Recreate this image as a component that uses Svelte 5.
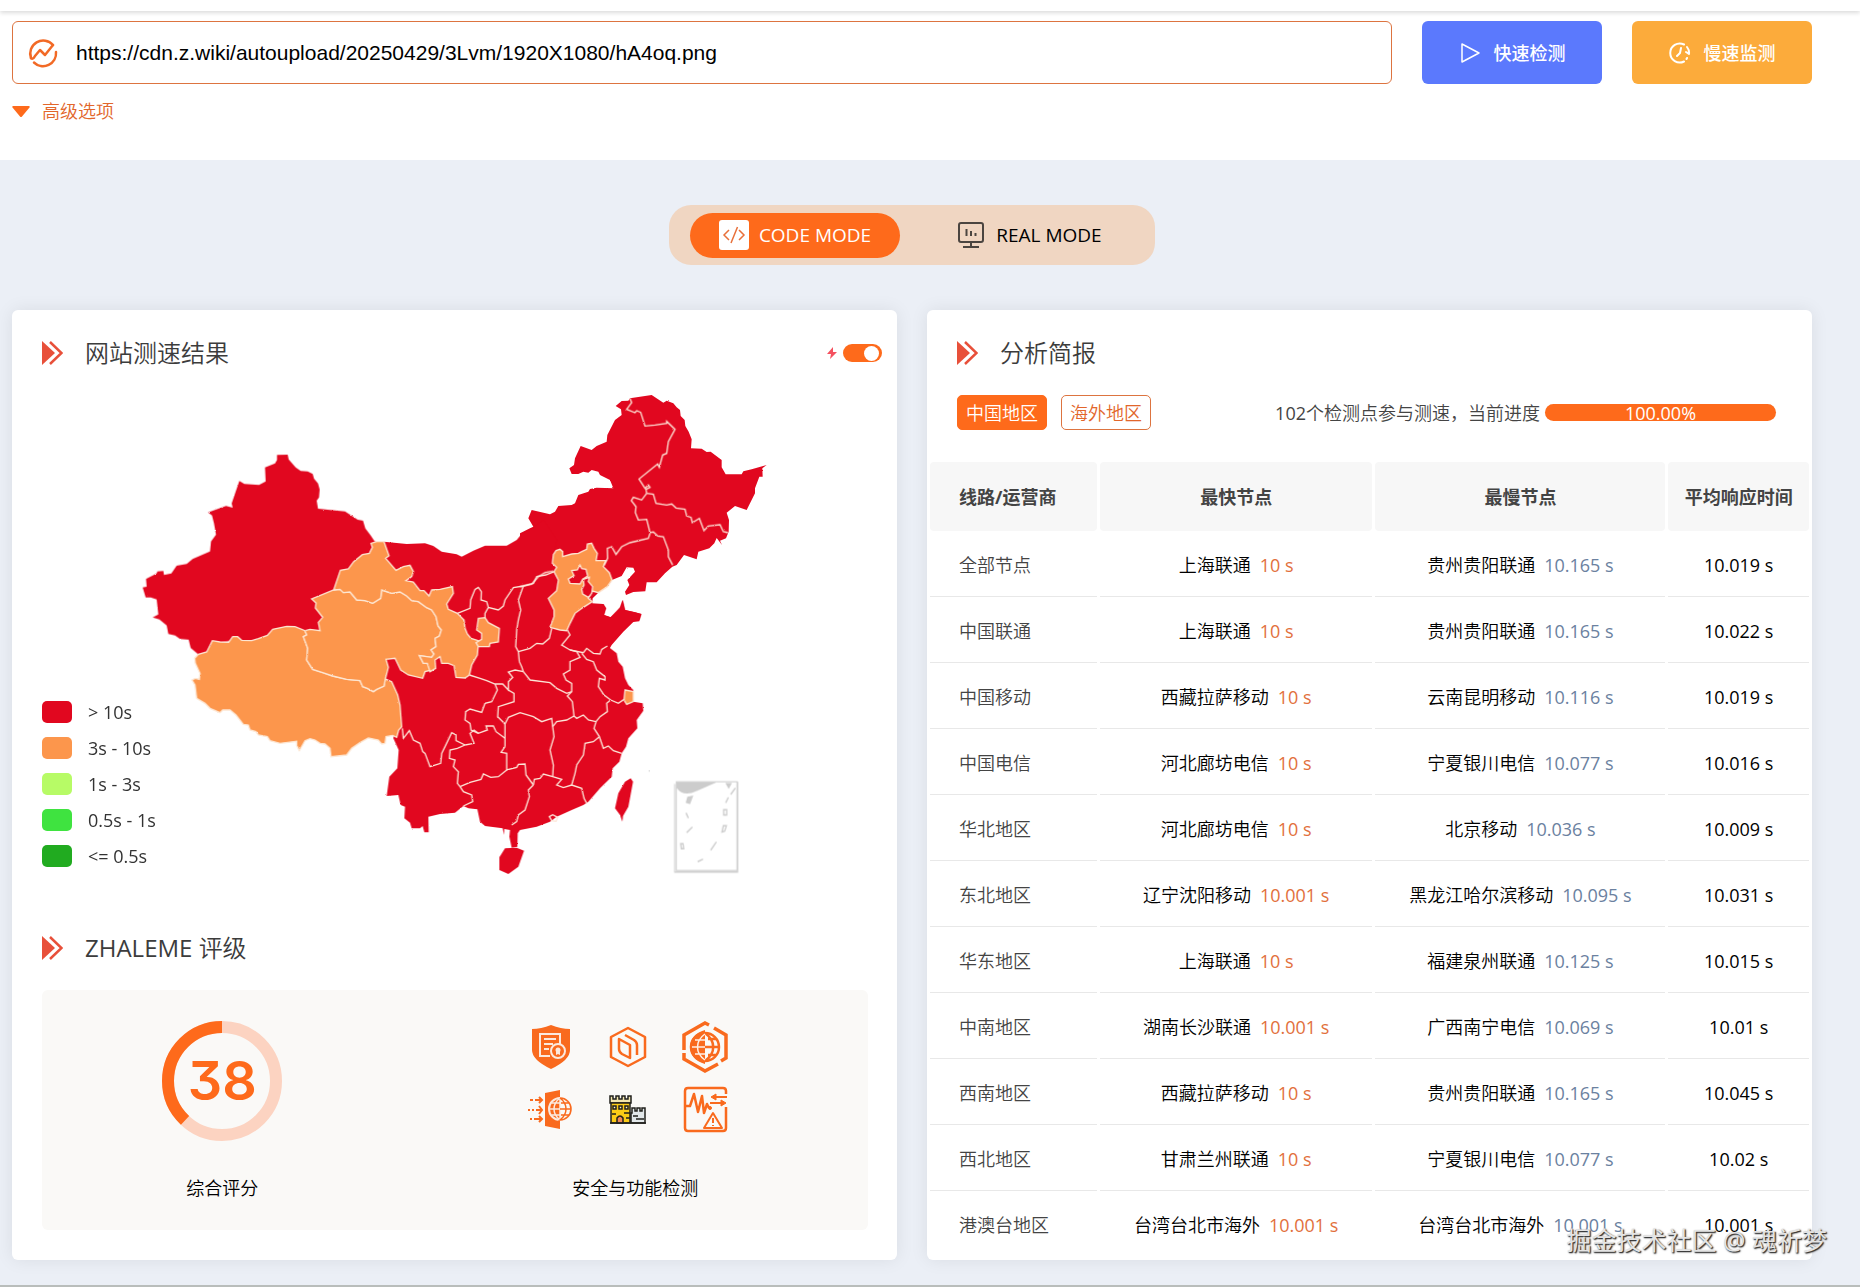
<script lang="ts">
    let url = 'https://cdn.z.wiki/autoupload/20250429/3Lvm/1920X1080/hA4oq.png';
    let mode = 'code';
    let area = 'china';
    let fast = true;
    let progress = 100;
    let score = 38;

    const legend = [
        { color: '#e1071f', label: '> 10s' },
        { color: '#fc964c', label: '3s - 10s' },
        { color: '#b7fb66', label: '1s - 3s' },
        { color: '#3fe340', label: '0.5s - 1s' },
        { color: '#21ab20', label: '<= 0.5s' }
    ];

    const rows = [
        { line: '全部节点', fast: '上海联通', fastTime: '10 s', slow: '贵州贵阳联通', slowTime: '10.165 s', avg: '10.019 s' },
        { line: '中国联通', fast: '上海联通', fastTime: '10 s', slow: '贵州贵阳联通', slowTime: '10.165 s', avg: '10.022 s' },
        { line: '中国移动', fast: '西藏拉萨移动', fastTime: '10 s', slow: '云南昆明移动', slowTime: '10.116 s', avg: '10.019 s' },
        { line: '中国电信', fast: '河北廊坊电信', fastTime: '10 s', slow: '宁夏银川电信', slowTime: '10.077 s', avg: '10.016 s' },
        { line: '华北地区', fast: '河北廊坊电信', fastTime: '10 s', slow: '北京移动', slowTime: '10.036 s', avg: '10.009 s' },
        { line: '东北地区', fast: '辽宁沈阳移动', fastTime: '10.001 s', slow: '黑龙江哈尔滨移动', slowTime: '10.095 s', avg: '10.031 s' },
        { line: '华东地区', fast: '上海联通', fastTime: '10 s', slow: '福建泉州联通', slowTime: '10.125 s', avg: '10.015 s' },
        { line: '中南地区', fast: '湖南长沙联通', fastTime: '10.001 s', slow: '广西南宁电信', slowTime: '10.069 s', avg: '10.01 s' },
        { line: '西南地区', fast: '西藏拉萨移动', fastTime: '10 s', slow: '贵州贵阳联通', slowTime: '10.165 s', avg: '10.045 s' },
        { line: '西北地区', fast: '甘肃兰州联通', fastTime: '10 s', slow: '宁夏银川电信', slowTime: '10.077 s', avg: '10.02 s' },
        { line: '港澳台地区', fast: '台湾台北市海外', fastTime: '10.001 s', slow: '台湾台北市海外', slowTime: '10.001 s', avg: '10.001 s' }
    ];

    // 省界线
    const northeastBorders = [
        'M330,55 335,68 320,88 345,98 350,92 362,97 375,138 405,135 440,130 440,124 465,148 445,185 440,220 428,225 418,262 413,252 357,297 375,325 385,315 390,322 378,328 380,340',
        'M380,340 400,343 408,370 440,375 455,372 468,384 495,388 500,408 513,412 517,428 538,415 552,452 565,438 600,434 610,455 624,458',
        'M380,340 365,360 340,352 334,362 348,380 346,398 355,420 380,418 390,458 400,456 413,468 430,470 445,510 445,530 458,555',
        'M390,460 385,475 355,482 330,488 305,500 288,523 275,500 262,505 263,535 252,555',
        'M100,573 75,578 55,590 35,612 0,620'
    ];

    const southBorders = [
        'M553,155 527,165 500,170 490,190 460,198 430,203 405,240 400,258 385,270 355,262 350,245 333,240 334,215 325,202 315,208 302,240 300,265 262,280',
        'M355,262 345,280 345,293',
        'M460,198 445,240 452,270 445,300 440,330 437,380 445,395 448,425 455,440 460,455',
        'M445,395 480,385 500,370 518,372 538,355 545,325',
        'M460,455 435,450 415,456 428,472 415,485 415,510 398,492 375,492 350,482 330,475 298,465',
        'M460,455 480,480 540,488 560,505 590,520 605,515',
        'M592,330 600,345 575,375 600,390 620,395 630,412 600,425 600,450 580,462 588,480 605,490 605,515 592,528 607,545 612,588',
        'M600,390 640,398 650,385 670,400 690,402 695,388 712,378',
        'M635,400 650,418 670,425 680,450 705,470 705,480 688,475 685,500 702,525 722,540 745,550 762,538',
        'M722,540 710,550 712,575 690,590 678,605',
        'M548,620 560,605 590,600 612,588 620,595 640,585 655,600 678,605 672,625 688,650 700,685 715,678 730,692 755,700',
        'M688,650 670,665 645,670 640,705 620,735 615,760 605,795',
        'M415,510 432,520 432,545 385,560 383,590 405,612',
        'M405,680 405,612 415,592 450,578 490,590 515,605 545,595 548,620 552,650 540,690 550,735 548,770',
        'M405,680 393,697 410,700 410,750 440,742 445,733 465,732 468,765 490,795',
        'M490,795 493,778 510,775 520,762 548,770 575,778 560,795 580,803 605,795 635,805 642,835 650,850',
        'M490,795 475,810 478,830 465,870 445,885 440,905 425,915',
        'M410,750 385,770 362,772 340,762 333,778 300,787 270,800',
        'M270,800 262,790 265,755 250,740 255,720 238,715 240,690 262,685 285,675',
        'M97,625 100,655 118,632 130,660 150,670 158,695 165,700 180,740 212,730 215,700 225,680 245,638 258,645 258,662 285,675',
        'M285,675 312,670 300,640 312,630 325,640 352,630 348,618 370,618 378,635 405,655',
        'M375,492 382,510 365,545 345,550 335,577 300,567 287,575 285,600 300,610 303,630 325,640',
        'M270,800 280,815 305,825 308,845 280,858',
        'M538,890 548,884 563,892 558,904 545,902Z'
    ];
</script>

<div class="page">
    <div class="top-line"></div>

    <header class="search">
        <form class="search-row" on:submit|preventDefault>
            <div class="url-box">
                <svg class="url-icon" viewBox="0 0 30 30" fill="none" stroke="#f26a26" stroke-width="2.5" stroke-linejoin="round" stroke-linecap="round">
                    <path d="M25 7A13 13 0 0 0 3 20M28 14A13 13 0 0 1 6 24.500" />
                    <path d="M3 20Q5 22 7 18L12 12L17 17L25 7" />
                </svg>
                <input type="text" aria-label="网址" bind:value={url} />
            </div>
            <button type="submit" class="check-btn quick">
                <svg viewBox="0 0 22 22" fill="none" stroke="white" stroke-width="1.5" stroke-linejoin="round"><path d="M3 2L20 11L3 20Z" /></svg>
                快速检测
            </button>
            <button type="button" class="check-btn slow">
                <svg viewBox="0 0 22 22" fill="none" stroke="white" stroke-width="2" stroke-linecap="round"><path d="M15 2.500A9.500 9.500 0 1 0 15 19.500M18 5A9.500 9.500 0 0 1 20 12M20 12L17 10M18 16L17.500 17M12 6L11 11L8 14" /></svg>
                慢速监测
            </button>
        </form>
        <button type="button" class="advanced">
            <svg viewBox="0 0 18 11"><path d="M1 0H17Q18 0 17.500 1.500L10 10.500Q9 11.500 8 10.500L.5 1.500Q0 0 1 0Z" fill="#fe6a1b" /></svg>
            高级选项
        </button>
    </header>

    <main>
        <div class="mode-switch">
            <button class="mode-btn" class:active={mode === 'code'} on:click={() => (mode = 'code')}>
                <svg viewBox="0 0 30 30" class="mode-icon">
                    <rect width="30" height="30" rx="3" fill="white" />
                    <path d="M10 10L5 15L10 20M20 10L25 15L20 20M18.500 7L12 23" fill="none" stroke="#e8703a" stroke-width="1.500" />
                </svg>
                CODE MODE
            </button>
            <button class="mode-btn" class:active={mode === 'real'} on:click={() => (mode = 'real')}>
                <svg viewBox="0 0 30 30" class="mode-icon">
                    <path d="M5 3H25Q27 3 27 5V20Q27 22 25 22H5Q3 22 3 20V5Q3 3 5 3ZM15 22V27M7 27H23" fill="none" stroke="#4b4540" stroke-width="2" />
                    <path d="M10.500 9V16M15 11V16M19.500 13V16" stroke="#4b4540" stroke-width="2" />
                </svg>
                REAL MODE
            </button>
        </div>

        <div class="cards">
            <section class="card">
                <div class="card-title">
                    <svg class="arrow" viewBox="0 0 21 24"><path d="M0 0L13 12L0 24Z" fill="#e8503a" /><path d="M8 1L19.500 12L8 23" fill="none" stroke="#e8503a" stroke-width="2.500" /></svg>
                    <h2>网站测速结果</h2>
                    <label class="switch">
                        <svg viewBox="0 0 10 12"><path d="M6 0L0 7H4L3 12L10 5H6Z" fill="#f4515f" /></svg>
                        <input type="checkbox" aria-label="快速模式" bind:checked={fast} />
                        <span class="track"></span>
                    </label>
                </div>

                <div class="map-area">
                    <svg class="map" viewBox="0 0 1950 1530" role="img" aria-label="中国地图">
                        <defs>
                            <filter id="coast" x="-2%" y="-2%" width="104%" height="104%" color-interpolation-filters="sRGB">
                                <feTurbulence type="fractalNoise" baseFrequency="0.2" numOctaves="2" seed="4" />
                                <feDisplacementMap in="SourceGraphic" scale="5" xChannelSelector="R" yChannelSelector="G" />
                            </filter>
                        </defs>
                        <g filter="url(#coast)">
                            <g class="slowest">
                                <path d="M441,225 473,224 476,238 497,262 512,273 533,274 548,282 552,296 564,310 569,328 567,352 560,362 564,386 600,390 645,394 683,419 699,422 706,445 722,466 733,483 760,500 700,600 611,640 545,657 570,669 570,684 590,712 580,752 525,760 470,745 412,772 365,788 318,780 247,792 230,820 205,823 182,804 176,779 150,777 135,766 115,762 110,736 88,718 68,712 85,703 80,658 62,652 47,652 38,622 50,620 48,597 80,580 82,574 100,573 102,585 124,580 140,557 170,552 188,537 240,514 243,484 258,464 252,430 246,406 234,397 288,378 308,383 305,370 328,303 343,312 387,315 407,304 405,262 435,250 441,240Z" />
                                <g transform="translate(1170 0)">
                                    <path d="M330,55 395,45 430,68 440,62 460,70 470,82 480,90 482,108 494,120 496,138 506,155 515,178 513,205 545,206 560,216 572,215 605,240 605,262 617,283 665,283 670,274 695,268 740,255 727,265 728,290 718,290 705,325 705,340 680,390 645,378 620,398 627,420 626,455 618,475 600,482 606,495 590,474 583,490 568,505 535,515 530,538 492,525 470,555 457,560 435,580 410,607 380,607 376,634 340,636 318,645 315,635 328,615 322,600 345,575 340,563 320,562 305,588 276,600 262,620 235,638 218,655 217,672 250,672 258,685 252,705 272,712 300,685 308,660 315,690 345,697 364,702 358,724 340,726 310,755 275,795 265,812 0,812 0,460 30,445 40,440 25,415 35,390 90,403 105,395 115,378 155,375 165,370 175,345 205,335 210,327 230,323 280,325 270,300 240,285 235,275 215,270 205,278 190,275 175,282 155,282 148,265 162,255 165,235 182,198 215,210 230,198 260,185 262,165 285,120 305,105 303,88 287,78 305,63 325,62Z" />
                                </g>
                                <g transform="translate(720 420)">
                                    <path d="M42,65 110,72 165,70 190,78 215,95 260,103 275,110 310,92 345,77 410,77 440,60 455,42 487,25 520,0 560,60 540,160 600,250 665,250 700,252 708,265 702,285 722,292 750,262 758,240 765,270 795,277 814,282 808,300 780,305 755,335 730,355 712,378 740,400 745,425 758,440 765,475 775,495 790,510 790,545 818,550 820,572 800,600 802,625 775,655 768,680 755,700 748,725 728,745 725,770 690,805 655,845 640,855 605,870 560,890 540,905 500,920 450,930 443,940 442,980 425,983 418,950 420,930 403,927 402,945 398,925 345,918 330,905 322,868 295,865 280,858 255,878 210,882 175,890 176,937 163,937 158,918 150,925 125,925 120,908 103,895 105,860 92,855 85,825 50,828 58,770 82,745 86,690 70,655 75,625 70,540 50,500 35,470 45,430 100,300 0,100Z" />
                                    <path d="M405,985 440,983 462,992 445,1040 415,1062 388,1050 388,1012Z" />
                                    <path d="M782,775 789,785 775,860 759,888 757,905 750,885 735,865 745,820 765,785Z" />
                                </g>
                            </g>
                            <g class="medium">
                                <path d="M205,823 230,816 247,782 270,786 296,787 308,770 323,770 335,781 365,782 385,776 412,766 428,748 470,739 495,740 525,752 530,765 520,770 533,805 530,840 548,868 578,878 608,888 650,898 690,902 698,920 712,925 730,935 740,928 762,918 766,897 785,905 803,945 810,975 815,1040 806,1050 800,1072 788,1066 768,1070 765,1090 755,1092 745,1080 715,1074 690,1088 665,1105 650,1125 603,1130 600,1105 585,1092 570,1090 555,1080 540,1076 525,1082 508,1112 500,1096 500,1084 450,1090 420,1082 412,1070 385,1065 378,1055 360,1050 355,1035 340,1033 318,1005 300,990 278,990 270,998 240,985 225,970 200,955 195,915 186,900 196,895 208,898 210,880 196,850 194,835Z" />
                                <path d="M611,630 630,628 640,638 660,636 680,660 705,662 728,670 752,655 755,630 785,640 810,636 830,648 845,662 865,665 890,683 905,690 918,710 924,738 934,750 928,768 915,775 918,800 903,810 912,822 905,832 868,827 880,850 892,850 905,870 885,875 878,895 835,885 812,870 795,835 768,838 775,862 766,897 762,918 740,928 730,935 712,925 698,920 690,902 650,898 608,888 578,878 548,868 530,840 533,805 520,770 530,765 525,752 540,748 570,752 565,727 578,712 556,684 558,669 545,657Z" />
                                <path d="M611,630 631,571 655,567 671,545 697,524 718,520 727,502 723,490 740,485 762,485 777,527 767,535 798,571 820,560 840,556 850,575 845,590 828,602 850,606 870,632 882,632 897,648 905,630 930,628 967,620 970,640 950,672 955,688 982,700 1002,720 1005,745 1012,762 1023,775 1045,782 1045,792 1042,825 1025,855 1018,885 1005,894 978,892 972,857 955,850 935,850 930,830 915,840 917,865 900,875 892,850 880,850 868,827 905,832 912,822 903,810 918,800 915,775 928,768 934,750 924,738 918,710 905,690 890,683 865,665 845,662 830,648 810,636 785,640 755,630 752,655 728,670 705,662 680,660 660,636 640,638 630,628Z" />
                                <path d="M1045,715 1065,713 1075,728 1108,745 1105,786 1080,790 1078,800 1045,800 1038,788 1055,778 1055,760 1040,750Z" />
                                <g transform="translate(1170 0)">
                                    <path d="M100,524 108,512 120,508 128,515 128,530 155,522 175,520 185,515 200,508 202,492 215,490 222,505 232,520 228,542 258,542 250,560 268,578 276,600 262,620 235,638 218,633 205,655 217,665 190,682 165,700 150,730 140,752 120,750 90,742 102,710 102,690 85,655 110,632 115,600 102,575 110,562 97,550Z" />
                                </g>
                                <path d="M1485,930 1510,935 1510,965 1490,973 1482,960Z" />
                            </g>
                            <g class="slowest capital" transform="translate(1170 0)">
                                <path d="M180,555 185,566 198,568 203,588 188,598 180,612 150,610 145,597 162,587 155,572 172,570Z" />
                                <path d="M190,598 208,592 205,605 218,620 215,640 205,652 188,642 185,628 192,615Z" />
                            </g>
                            <g class="borders">
                                <g transform="translate(1170 0)">
                                    {#each northeastBorders as d}<path {d} />{/each}
                                </g>
                                <g transform="translate(720 420)">
                                    {#each southBorders as d}<path {d} />{/each}
                                </g>
                            </g>
                        </g>
                        <g transform="translate(1530 -240) scale(1 1.148)" stroke="#cccccc" fill="none">
                            <path d="M109,1259H291V1491H109ZM104,1265V1495H293V1259" stroke-width="3" />
                            <path d="M110,1260H230L170,1283Q130,1300 110,1275ZM256,1262H276L266,1278ZM137,1314L142,1298 160,1295 150,1318Z" fill="#cccccc" stroke="none" />
                            <path d="M272,1292L286,1275M257,1314L265,1300M251,1332H260V1346H251ZM246,1390L250,1374 259,1374 254,1388ZM212,1438L229,1416M173,1468L189,1461M138,1340L145,1354M140,1392L157,1377M122,1421H129L131,1434H124Z" stroke-width="4" />
                        </g>
                        <path d="M1556,1173h4" stroke="#ccc" stroke-width="3" />
                    </svg>
                    <ul class="legend">
                        {#each legend as item}
                            <li><span class="swatch" style="background: {item.color}"></span>{item.label}</li>
                        {/each}
                    </ul>
                </div>

                <div class="card-title rating-title">
                    <svg class="arrow" viewBox="0 0 21 24"><path d="M0 0L13 12L0 24Z" fill="#e8503a" /><path d="M8 1L19.500 12L8 23" fill="none" stroke="#e8503a" stroke-width="2.500" /></svg>
                    <h2><span class="latin">ZHALEME</span> 评级</h2>
                </div>

                <div class="rating">
                    <div class="rating-item">
                        <div class="gauge">
                            <svg viewBox="0 0 120 120" fill="none" stroke-width="12">
                                <circle cx="60" cy="60" r="54" stroke="#fcd3c1" />
                                <circle cx="60" cy="60" r="54" stroke="#fe6a1b" pathLength="100" stroke-dasharray="{score} 100" transform="translate(120 0) scale(-1 1) rotate(-90 60 60)" />
                            </svg>
                            <strong>{score}</strong>
                        </div>
                        <p>综合评分</p>
                    </div>
                    <div class="rating-item">
                        <div class="icons">
                            <svg viewBox="0 0 48 48">
                                <path d="M24 2Q34 6 43 6V27Q43 37 24 46Q5 37 5 27V6Q14 6 24 2Z" fill="#f96a1e" />
                                <path d="M33 22V11H13V33H23M17 16H29M17 21H26M17 26H22" fill="none" stroke="#fbe9de" stroke-width="2" />
                                <circle cx="31" cy="28" r="7" fill="#f96a1e" stroke="#fbe9de" stroke-width="2" />
                                <circle cx="31" cy="27" r="2.500" fill="#fbe9de" /><path d="M29 29V32L31 31L33 32V29" fill="#fbe9de" />
                            </svg>
                            <svg viewBox="0 0 48 48" fill="none" stroke="#f96a1e" stroke-width="2.500" stroke-linejoin="round">
                                <path d="M24 5L41 14V34L24 43L7 34V14Z" />
                                <path d="M15 16L26 22V35L18 31Q15 29 15 26ZM21 12L30 17Q33 19 33 22V32" />
                            </svg>
                            <svg viewBox="0 2 48 48" fill="none" stroke="#f96a1e" stroke-width="3.500">
                                <path d="M28 4L24 2L3 14V29M33 7L45 14V37L40 40M37 43L24 50L3 38V32" />
                                <path d="M24 9V43C4 38 4 14 24 9Z" fill="#f96a1e" stroke="none" />
                                <circle cx="24" cy="26" r="14" stroke-width="2.500" />
                                <path d="M24 12C35 20 35 32 24 40M24 26H38M27 18H35M27 34H35" stroke-width="2.500" />
                                <path d="M24 13C14 20 14 32 24 39M11 26H24M14 19H24M14 33H24" stroke="#fff0e6" stroke-width="1.500" />
                            </svg>
                            <svg viewBox="0 0 48 48" fill="none" stroke="#f96a1e" stroke-width="2">
                                <path d="M18 7L33 4V43L18 40Z" fill="#f96a1e" stroke="none" />
                                <path d="M3 14H6M8 14H14M1 24H3M5 24H7M9 24H14M3 33H5M7 33H14" />
                                <path d="M12 11L15 14L12 17M12 20L15 24L12 28M12 30L15 33L12 36" />
                                <circle cx="33" cy="23" r="11" stroke="#fbe9de" />
                                <path d="M33 12V34M22 23H33M25 17H33M25 29H33M33 12C25 18 25 28 33 34" stroke="#fbe9de" stroke-width="1.500" />
                                <path d="M33 12A11 11 0 0 1 33 34C41 28 41 18 33 12M33 23H44M34 17H42M34 29H42" stroke-width="1.500" />
                            </svg>
                            <svg viewBox="0 0 48 48" stroke="#20201c" stroke-width="1.500">
                                <path d="M6 17V10H9V13H12V10H15V13H18V10H21V13H24V10H27V17Z" fill="#f3e7ad" />
                                <path d="M7 17H26V37H7Z" fill="#fbcb16" />
                                <path d="M28 27V22H31V25H33V22H36V25H38V22H41V37H27V27Z" fill="#e2e8ea" />
                                <path d="M9 20H12V23H9ZM15 20H18V23H15ZM21 20H24V23H21Z" fill="#fff6c8" />
                                <path d="M13 37V32Q16 28 19 32V37Z" fill="#f08a55" />
                                <path d="M6 37H42M20 27H26M8 28H12M22 32H26M29 30H34M32 33H40" fill="none" />
                            </svg>
                            <svg viewBox="0 0 48 48" fill="none" stroke="#f96a1e" stroke-width="2.500" stroke-linejoin="round">
                                <path d="M45 8V5Q45 2 42 2H7Q4 2 4 5V42Q4 45 7 45H42Q45 45 45 42V21" />
                                <path d="M4 20H9L13 8L17 26L21 10L23 27L26 18L28 22" />
                                <circle cx="29" cy="22" r="1.500" fill="#f96a1e" stroke-width="1" />
                                <path d="M46 11H32M29 17H43" stroke-width="2" />
                                <path d="M35 8L30 11L35 14ZM40 14L45 17L40 20Z" fill="#f96a1e" stroke-width="1" />
                                <path d="M32 27L41 42H23Z" stroke-width="2" />
                                <path d="M32 32V37M32 39V40" stroke-width="2" />
                            </svg>
                        </div>
                        <p>安全与功能检测</p>
                    </div>
                </div>
            </section>

            <section class="card report">
                <div class="card-title">
                    <svg class="arrow" viewBox="0 0 21 24"><path d="M0 0L13 12L0 24Z" fill="#e8503a" /><path d="M8 1L19.500 12L8 23" fill="none" stroke="#e8503a" stroke-width="2.500" /></svg>
                    <h2>分析简报</h2>
                </div>
                <div class="report-bar">
                    <button class="tag" class:active={area === 'china'} on:click={() => (area = 'china')}>中国地区</button>
                    <button class="tag" class:active={area === 'oversea'} on:click={() => (area = 'oversea')}>海外地区</button>
                    <span class="progress-text"><span class="latin">102</span>个检测点参与测速，当前进度</span>
                    <div class="progress" role="progressbar" aria-label="当前进度" aria-valuenow={progress}>
                        <div class="progress-inner" style="width: {progress}%">{progress.toFixed(2)}%</div>
                    </div>
                </div>
                <table>
                    <thead>
                        <tr>
                            <th class="line">线路/运营商</th>
                            <th class="fastest">最快节点</th>
                            <th class="slowest-node">最慢节点</th>
                            <th>平均响应时间</th>
                        </tr>
                    </thead>
                    <tbody>
                        {#each rows as row}
                            <tr>
                                <td class="line">{row.line}</td>
                                <td>{row.fast}<span class="time fast-time">{row.fastTime}</span></td>
                                <td>{row.slow}<span class="time slow-time">{row.slowTime}</span></td>
                                <td class="latin">{row.avg}</td>
                            </tr>
                        {/each}
                    </tbody>
                </table>
            </section>
        </div>
    </main>

    <div class="watermark">掘金技术社区 @ 魂祈梦</div>
</div>

<style>
    :global(body) {
        background: #ebeff6;
    }

    .page {
        position: relative;
        font-family: "Open Sans", "Noto Sans CJK SC", sans-serif;
        font-size: 18px;
        font-weight: 350;
        line-height: 24px;
        color: #000;
        border-bottom: 2px solid #b9bdbb;
    }

    .page * {
        box-sizing: border-box;
    }

    button,
    input {
        font: inherit;
        color: inherit;
        border: none;
        background: none;
        padding: 0;
    }

    button {
        cursor: pointer;
    }

    h2,
    p,
    ul {
        margin: 0;
        padding: 0;
        font-weight: inherit;
    }

    .latin {
        font-weight: 400;
    }

    /* 顶部搜索 */
    .top-line {
        position: relative;
        height: 11px;
        background: white;
        box-shadow: 0 2px 4px rgba(0, 0, 0, 0.14);
    }

    .search {
        background: white;
        padding: 10px 48px 37px 12px;
    }

    .search-row {
        display: flex;
        gap: 30px;
    }

    .url-box {
        flex: 1;
        display: flex;
        align-items: center;
        height: 63px;
        border: 1px solid #dd7440;
        border-radius: 6px;
        padding: 0 15px;
        gap: 18px;
    }

    .url-icon {
        width: 30px;
        height: 30px;
    }

    .url-box input {
        flex: 1;
        min-width: 0;
        height: 40px;
        outline: none;
        font: 21px "Liberation Sans", Arial, sans-serif;
    }

    .check-btn {
        display: flex;
        align-items: center;
        justify-content: center;
        gap: 13px;
        width: 180px;
        height: 63px;
        border-radius: 6px;
        color: white;
        font-weight: 500;
    }

    .check-btn svg {
        width: 22px;
        height: 22px;
    }

    .quick {
        background: #5b79fd;
    }

    .slow {
        background: #fcab3b;
    }

    .advanced {
        display: flex;
        align-items: center;
        gap: 12px;
        margin-top: 15px;
        color: #e2662b;
    }

    .advanced svg {
        width: 18px;
        height: 11px;
    }

    main {
        padding: 45px 48px 25px 12px;
    }

    /* 模式切换 */
    .mode-switch {
        display: flex;
        align-items: center;
        gap: 24px;
        width: 486px;
        height: 60px;
        margin: 0 auto 45px;
        padding: 0 21px;
        border-radius: 22px;
        background: #f0d6c2;
    }

    .mode-btn {
        display: flex;
        flex: 1;
        align-items: center;
        justify-content: center;
        gap: 10px;
        height: 45px;
        border-radius: 23px;
        font-size: 19px;
        font-weight: 400;
    }

    .mode-btn.active {
        background: #fe6a1b;
        color: white;
    }

    .mode-icon {
        width: 30px;
        height: 30px;
    }

    /* 卡片 */
    .cards {
        display: grid;
        grid-template-columns: 1fr 1fr;
        gap: 30px;
    }

    .card {
        background: white;
        border-radius: 6px;
        padding: 23px 0 30px;
        box-shadow: 0 0 18px rgba(0, 0, 0, 0.08);
    }

    .card-title {
        display: flex;
        align-items: center;
        height: 40px;
        padding: 0 15px 0 30px;
        color: #3c3c3c;
    }

    .card-title h2 {
        font-size: 24px;
        line-height: 36px;
    }

    .arrow {
        width: 21px;
        height: 24px;
        margin-right: 22px;
    }

    .switch {
        display: flex;
        align-items: center;
        gap: 6px;
        margin-left: auto;
    }

    .switch svg {
        width: 10px;
        height: 12px;
    }

    .switch input {
        position: absolute;
        opacity: 0;
    }

    .track {
        display: flex;
        align-items: center;
        width: 39px;
        height: 18px;
        padding: 0 3px;
        border-radius: 9px;
        background: #ccc;
    }

    .track::before {
        content: '';
        width: 15px;
        height: 15px;
        border-radius: 8px;
        background: white;
    }

    .switch input:checked + .track {
        justify-content: flex-end;
        background: #fe6a1b;
    }

    /* 地图 */
    .map-area {
        position: relative;
        display: flex;
        justify-content: center;
        margin-top: 7px;
    }

    .map {
        width: 650px;
        max-width: 100%;
    }

    .slowest path {
        fill: #e1071f;
    }

    .medium path {
        fill: #fc964c;
    }

    .medium path,
    .capital path {
        stroke: #fde6d2;
        stroke-width: 4;
    }

    .borders path {
        fill: none;
        stroke: #fde6d8;
        stroke-width: 4;
    }

    .legend {
        position: absolute;
        left: 30px;
        bottom: 22px;
        display: grid;
        gap: 12px;
        list-style: none;
        color: #333;
        font-weight: 400;
    }

    .legend li {
        display: flex;
        align-items: center;
        gap: 16px;
    }

    .swatch {
        width: 30px;
        height: 22px;
        border-radius: 5px;
    }

    /* 评级 */
    .rating-title {
        margin-top: 38px;
    }

    .rating {
        display: grid;
        grid-template-columns: 31fr 40fr;
        margin: 22px 29px 0 30px;
        padding: 31px 0 30px;
        border-radius: 6px;
        background: #faf9f7;
        text-align: center;
    }

    .rating-item {
        display: flex;
        flex-direction: column;
        align-items: center;
        gap: 35px;
    }

    .gauge {
        display: grid;
        place-items: center;
        width: 120px;
        height: 120px;
    }

    .gauge svg,
    .gauge strong {
        grid-area: 1 / 1;
    }

    .gauge strong {
        font: 600 54px/64px Inter, sans-serif;
        font-feature-settings: "cv09";
        color: #fe6a1b;
    }

    .icons {
        display: grid;
        grid-template-columns: repeat(3, 48px);
        grid-auto-rows: 48px;
        gap: 15px 29px;
        height: 120px;
        padding: 2px 15px 0 0;
    }

    .icons svg {
        width: 48px;
        height: 48px;
        overflow: visible;
    }

    /* 分析简报 */
    .report {
        padding-bottom: 3px;
    }

    .report-bar {
        display: flex;
        align-items: center;
        margin: 22px 36px 32px 30px;
        color: #444;
    }

    .tag {
        height: 35px;
        margin-right: 14px;
        padding: 0 8px;
        border: 1px solid #dd7440;
        border-radius: 5px;
        color: #e2662b;
    }

    .tag.active {
        background: #fe6a1b;
        border-color: #fe6a1b;
        color: white;
    }

    .progress-text {
        margin-left: auto;
    }

    .progress {
        width: 231px;
        height: 17px;
        margin-left: 5px;
        border-radius: 9px;
        background: #eee;
    }

    .progress-inner {
        height: 100%;
        border-radius: 9px;
        background: #fe6a1b;
        color: white;
        text-align: center;
        line-height: 18px;
        font-weight: 400;
    }

    table {
        width: 100%;
        table-layout: fixed;
        border-collapse: separate;
        border-spacing: 3px 0;
    }

    th {
        height: 69px;
        padding: 0;
        background: #f7f7f7;
        border-radius: 4px;
        color: #444;
        font-weight: 700;
    }

    th.line {
        width: 19%;
    }

    th.fastest {
        width: 31%;
    }

    th.slowest-node {
        width: 33%;
    }

    th:last-child {
        width: 16%;
    }

    td {
        height: 66px;
        padding: 2px 0 0;
        border-bottom: 1px solid #e8e8e8;
        text-align: center;
    }

    tbody tr:last-child td {
        border-bottom: none;
    }

    .line {
        padding-left: 29px;
        text-align: left;
        color: #444;
    }

    .time {
        margin-left: 9px;
        font-weight: 400;
    }

    .fast-time {
        color: #e2703c;
    }

    .slow-time {
        color: #6b81a0;
    }

    .watermark {
        position: absolute;
        right: 33px;
        bottom: 27px;
        font-size: 25px;
        font-weight: 400;
        line-height: 36px;
        color: #e4e4e4;
        text-shadow: 1px 1px 1px #333, 1px 1px 2px #555;
    }
</style>
